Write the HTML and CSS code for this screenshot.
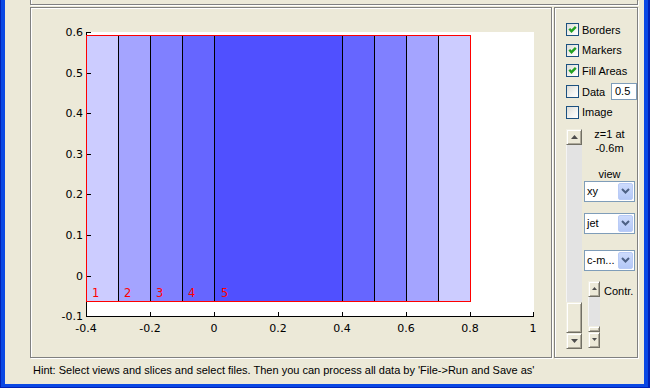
FILE: index.html
```html
<!DOCTYPE html>
<html>
<head>
<meta charset="utf-8">
<title>Viewer</title>
<link rel="stylesheet" href="styles.css">
</head>
<body>
<div class="frame">
  <div class="window">
    <div class="top-panel"></div>
    <div class="main-row">
      <div class="plot-panel">
        <svg class="plot" width="520" height="349" viewBox="31 8 520 349">
          <rect x="86" y="32" width="448" height="285" fill="#fff"/>
          <g shape-rendering="crispEdges">
            <rect x="86" y="35" width="32" height="267" fill="#ccccff"/>
            <rect x="118" y="35" width="32" height="267" fill="#a4a4ff"/>
            <rect x="150" y="35" width="32" height="267" fill="#8080ff"/>
            <rect x="182" y="35" width="32" height="267" fill="#6666ff"/>
            <rect x="214" y="35" width="128" height="267" fill="#5050ff"/>
            <rect x="342" y="35" width="32" height="267" fill="#6666ff"/>
            <rect x="374" y="35" width="32" height="267" fill="#8080ff"/>
            <rect x="406" y="35" width="32" height="267" fill="#a4a4ff"/>
            <rect x="438" y="35" width="32" height="267" fill="#ccccff"/>
            <path d="M118.5 35v267M150.5 35v267M182.5 35v267M214.5 35v267M342.5 35v267M374.5 35v267M406.5 35v267M438.5 35v267" stroke="#000" fill="none"/>
            <path d="M86.5 32V316.5H534" stroke="#000" fill="none"/>
            <path d="M86 32.5h5M86 73.5h5M86 113.5h5M86 154.5h5M86 194.5h5M86 235.5h5M86 276.5h5" stroke="#000" fill="none"/>
            <path d="M150.5 312v4M214.5 312v4M278.5 312v4M342.5 312v4M406.5 312v4M470.5 312v4M533.5 312v4" stroke="#000" fill="none"/>
            <rect x="86.5" y="35.5" width="384" height="266" fill="none" stroke="#ff0000"/>
          </g>
          <g class="ylabels" text-anchor="end">
            <text x="83" y="36">0.6</text>
            <text x="83" y="77">0.5</text>
            <text x="83" y="117">0.4</text>
            <text x="83" y="158">0.3</text>
            <text x="83" y="198">0.2</text>
            <text x="83" y="239">0.1</text>
            <text x="83" y="280">0</text>
            <text x="83" y="320">-0.1</text>
          </g>
          <g class="xlabels" text-anchor="middle">
            <text x="86" y="332">-0.4</text>
            <text x="150" y="332">-0.2</text>
            <text x="214" y="332">0</text>
            <text x="278" y="332">0.2</text>
            <text x="342" y="332">0.4</text>
            <text x="406" y="332">0.6</text>
            <text x="470" y="332">0.8</text>
            <text x="533" y="332">1</text>
          </g>
          <g class="nums">
            <text x="92" y="297">1</text>
            <text x="124" y="297">2</text>
            <text x="156" y="297">3</text>
            <text x="188" y="297">4</text>
            <text x="221" y="297">5</text>
          </g>
        </svg>
      </div>
      <div class="side-panel">
        <div class="check"><span class="box"><svg width="11" height="11" viewBox="0 0 11 11"><path d="M2.3 4.8l2.2 2.4L8.8 2.8" stroke="#21a121" stroke-width="2.4" fill="none"/></svg></span>Borders</div>
        <div class="check"><span class="box"><svg width="11" height="11" viewBox="0 0 11 11"><path d="M2.3 4.8l2.2 2.4L8.8 2.8" stroke="#21a121" stroke-width="2.4" fill="none"/></svg></span>Markers</div>
        <div class="check"><span class="box"><svg width="11" height="11" viewBox="0 0 11 11"><path d="M2.3 4.8l2.2 2.4L8.8 2.8" stroke="#21a121" stroke-width="2.4" fill="none"/></svg></span>Fill Areas</div>
        <div class="check"><span class="box"></span><span class="data-label">Data</span><span class="numbox">0.5</span></div>
        <div class="check"><span class="box"></span>Image</div>
        <div class="lower">
          <div class="vscroll big">
            <div class="sbtn"><svg width="7" height="4" viewBox="0 0 7 4"><path d="M0 4h7L3.5 0z" fill="#4d4d4d"/></svg></div>
            <div class="track"></div>
            <div class="thumb"></div>
            <div class="sbtn"><svg width="7" height="4" viewBox="0 0 7 4"><path d="M0 0h7L3.5 4z" fill="#4d4d4d"/></svg></div>
          </div>
          <div class="controls">
            <div class="zinfo">z=1 at<br>-0.6m</div>
            <div class="caption">view</div>
            <div class="select first"><span class="sel-text">xy</span><span class="drop"><svg width="9" height="6" viewBox="0 0 9 6"><path d="M1 1l3.5 3.5L8 1" stroke="#4d6185" stroke-width="2" fill="none"/></svg></span></div>
            <div class="select second"><span class="sel-text">jet</span><span class="drop"><svg width="9" height="6" viewBox="0 0 9 6"><path d="M1 1l3.5 3.5L8 1" stroke="#4d6185" stroke-width="2" fill="none"/></svg></span></div>
            <div class="select third"><span class="sel-text">c-m...</span><span class="drop"><svg width="9" height="6" viewBox="0 0 9 6"><path d="M1 1l3.5 3.5L8 1" stroke="#4d6185" stroke-width="2" fill="none"/></svg></span></div>
            <div class="contr-row">
              <div class="vscroll small">
                <div class="sbtn"><svg width="5" height="3" viewBox="0 0 5 3"><path d="M0 3h5L2.5 0z" fill="#4d4d4d"/></svg></div>
                <div class="track"></div>
                <div class="thumb"></div>
                <div class="sbtn"><svg width="5" height="3" viewBox="0 0 5 3"><path d="M0 0h5L2.5 3z" fill="#4d4d4d"/></svg></div>
              </div>
              <div class="contr-label">Contr.</div>
            </div>
          </div>
        </div>
      </div>
    </div>
    <div class="hint">Hint: Select views and slices and select files. Then you can process all data by 'File-&gt;Run and Save as'</div>
  </div>
</div>
</body>
</html>
```

FILE: styles.css
```css
* {
  box-sizing: border-box;
  margin: 0;
  padding: 0;
}

html, body {
  width: 650px;
  height: 388px;
  overflow: hidden;
}

body {
  background: #0021b5;
  font-family: "Liberation Sans", Arial, sans-serif;
  font-size: 11px;
  color: #000;
}

.frame {
  margin-left: 1px;
  width: 647px;
  height: 387px;
  background: #0a48e4;
  padding: 0 4px 3px 4px;
}

.window {
  width: 639px;
  height: 384px;
  background: #ece9d8;
  display: flex;
  flex-direction: column;
}

.top-panel {
  margin-left: 25px;
  width: 608px;
  height: 5px;
  flex: none;
  border: 1px solid #808080;
  border-top: none;
  box-shadow: inset 1px 0 0 #fff, 1px 1px 0 #fff;
}

.main-row {
  display: flex;
  margin: 2px 0 0 25px;
  height: 351px;
  flex: none;
}

.plot-panel {
  width: 522px;
  height: 351px;
  border: 1px solid #808080;
  box-shadow: inset 1px 1px 0 #fff, 1px 1px 0 #fff;
}

.plot {
  display: block;
}

.plot text {
  font-family: "DejaVu Sans", sans-serif;
  font-size: 11px;
  fill: #000;
}

.plot .nums text {
  fill: #ff0000;
  font-size: 11.5px;
}

.side-panel {
  margin-left: 2px;
  width: 84px;
  height: 351px;
  border: 1px solid #808080;
  box-shadow: inset 1px 1px 0 #fff, 1px 1px 0 #fff;
  padding: 11.5px 0 0 11px;
}

.check {
  display: flex;
  align-items: center;
  height: 20.6px;
  line-height: 14px;
  white-space: nowrap;
}

.box {
  width: 13px;
  height: 13px;
  flex: none;
  border: 1px solid #1c5180;
  background: linear-gradient(135deg, #dcdcd7 0%, #f4f4f1 60%, #ffffff 100%);
  margin-right: 3px;
  display: flex;
  align-items: center;
  justify-content: center;
}

.box svg {
  display: block;
}

.data-label {
  width: 29px;
}

.numbox {
  width: 26px;
  height: 17px;
  border: 1px solid #7f9db9;
  background: #fff;
  padding-left: 3px;
  line-height: 15px;
}

.lower {
  display: flex;
  align-items: flex-start;
  margin-top: 4.5px;
}

.vscroll {
  display: flex;
  flex-direction: column;
  flex: none;
}

.vscroll.big {
  width: 16px;
  height: 220px;
  margin-top: 2px;
}

.vscroll.small {
  width: 12px;
  height: 67px;
}

.sbtn,
.thumb {
  background: #ece9d8;
  border: 1px solid;
  border-color: #f1efe2 #716f64 #716f64 #f1efe2;
  box-shadow: inset 1px 1px 0 #fff, inset -1px -1px 0 #aca899;
  display: flex;
  align-items: center;
  justify-content: center;
  flex: none;
}

.sbtn {
  height: 16px;
}

.sbtn svg {
  display: block;
}

.big .thumb {
  height: 31px;
}

.small .thumb {
  height: 6px;
}

.track {
  flex: 1;
  background: #e3e3e3;
  border-left: 1px solid #f4f4f4;
}

.controls {
  width: 51px;
  margin-left: 2px;
  display: flex;
  flex-direction: column;
  text-align: center;
  line-height: 14px;
}

.caption {
  margin-top: 12px;
}

.select {
  height: 21px;
  border: 1px solid #7f9db9;
  background: #fff;
  display: flex;
  align-items: center;
  padding: 1px;
  text-align: left;
}

.select.second {
  margin-top: 11px;
}

.select.third {
  margin-top: 16px;
}

.sel-text {
  flex: 1;
  padding-left: 1px;
  white-space: nowrap;
  overflow: hidden;
}

.drop {
  width: 15px;
  height: 17px;
  flex: none;
  background: linear-gradient(#cddbfc, #b4c8f7);
  border: 1px solid #b9cbf6;
  border-radius: 2px;
  display: flex;
  align-items: center;
  justify-content: center;
}

.drop svg {
  display: block;
}

.contr-row {
  display: flex;
  align-items: flex-start;
  margin: 10px 0 0 4px;
}

.contr-label {
  margin: 3px 0 0 4px;
  text-align: left;
  white-space: nowrap;
}

.hint {
  padding: 5px 0 0 28px;
  line-height: 14px;
  white-space: nowrap;
}
```
